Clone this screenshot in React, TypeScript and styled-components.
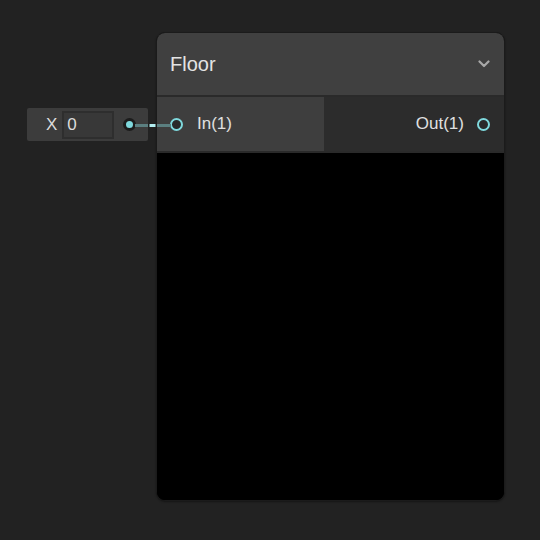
import React from "react";
import styled, { createGlobalStyle } from "styled-components";

const Global = createGlobalStyle`
  html, body { margin: 0; padding: 0; background: #222222; }
  body { font-family: "Liberation Sans", Arial, sans-serif; }
`;

const Canvas = styled.div`
  position: relative;
  width: 540px;
  height: 540px;
  background: #222222;
  overflow: hidden;
`;

const NodeBox = styled.div<{ $x: number; $y: number; $w: number; $h: number }>`
  position: absolute;
  left: ${(p) => p.$x}px;
  top: ${(p) => p.$y}px;
  width: ${(p) => p.$w}px;
  height: ${(p) => p.$h}px;
  box-sizing: border-box;
`;

const FloorNode = styled(NodeBox)`
  border: 1px solid #1b1b1b;
  border-radius: 9px;
  overflow: hidden;
  display: flex;
  flex-direction: column;
  background: #000;
  box-shadow: 0 1px 2px rgba(0, 0, 0, 0.4);
`;

const Header = styled.div`
  height: 62px;
  flex: none;
  display: flex;
  align-items: center;
  justify-content: space-between;
  padding: 0 14px 0 13px;
  background: #404040;
  border-bottom: 2px solid #2a2a2a;
  color: #e4e4e4;
  font-size: 20px;
`;

const PortRow = styled.div`
  height: 54px;
  flex: none;
  display: grid;
  grid-template-columns: 167px 1fr;
  border-bottom: 2px solid #2a2a2a;
`;

const PortCell = styled.div<{ $side: "in" | "out" }>`
  display: flex;
  align-items: center;
  gap: ${(p) => (p.$side === "in" ? 14 : 13)}px;
  justify-content: ${(p) => (p.$side === "in" ? "flex-start" : "flex-end")};
  padding: ${(p) => (p.$side === "in" ? "0 0 0 13px" : "0 14px 0 0")};
  background: ${(p) => (p.$side === "in" ? "#3e3e3e" : "#2c2c2c")};
  color: #e0e0e0;
  font-size: 17px;
`;

const PortRing = styled.span`
  width: 9px;
  height: 9px;
  border-radius: 50%;
  border: 2.5px solid #7fd9dd;
  background: #2a2a2a;
  flex: none;
`;

const Preview = styled.div`
  flex: 1;
  background: #000;
`;

const ValueNode = styled(NodeBox)`
  background: #3c3c3c;
  border-radius: 2px;
  display: flex;
  align-items: center;
  padding-left: 19px;
  color: #dcdcdc;
  font-size: 17px;
`;

const Label = styled.span`
  margin-right: 5px;
`;

const ValueInput = styled.div`
  width: 52px;
  height: 28px;
  box-sizing: border-box;
  border: 2px solid #2e2e2e;
  background: #383838;
  display: flex;
  align-items: center;
  padding-left: 3px;
  color: #dcdcdc;
  font-size: 17px;
`;

const OutDot = styled.span`
  margin-left: 9px;
  width: 7px;
  height: 7px;
  border-radius: 50%;
  background: #7fd9dd;
  border: 3px solid #1c1c1c;
  flex: none;
`;

const Wire = styled.svg`
  position: absolute;
  left: 0;
  top: 0;
  pointer-events: none;
`;

const Chevron = () => (
  <svg width="12" height="8" viewBox="0 0 12 8">
    <path d="M1.5 1.5 L6 6 L10.5 1.5" fill="none" stroke="#a8a8a8" strokeWidth="2.2" strokeLinecap="round" strokeLinejoin="round" />
  </svg>
);

export default function App() {
  return (
    <Canvas>
      <Global />
      <FloorNode $x={156} $y={32} $w={349} $h={469}>
        <Header>
          <span>Floor</span>
          <Chevron />
        </Header>
        <PortRow>
          <PortCell $side="in">
            <PortRing />
            <span>In(1)</span>
          </PortCell>
          <PortCell $side="out">
            <span>Out(1)</span>
            <PortRing />
          </PortCell>
        </PortRow>
        <Preview />
      </FloorNode>
      <ValueNode $x={27} $y={108} $w={121} $h={33}>
        <Label>X</Label>
        <ValueInput>0</ValueInput>
        <OutDot />
      </ValueNode>
      <Wire width="540" height="540">
        <line x1="135" y1="125.5" x2="148" y2="125.5" stroke="#5b7f80" strokeWidth="3" />
        <line x1="148" y1="125.5" x2="157" y2="125.5" stroke="#1c1c1c" strokeWidth="3" />
        <line x1="149.5" y1="125.5" x2="155.5" y2="125.5" stroke="#b3eef0" strokeWidth="3" />
        <line x1="157" y1="125.5" x2="171" y2="125.5" stroke="#5b7f80" strokeWidth="3" />
      </Wire>
    </Canvas>
  );
}
